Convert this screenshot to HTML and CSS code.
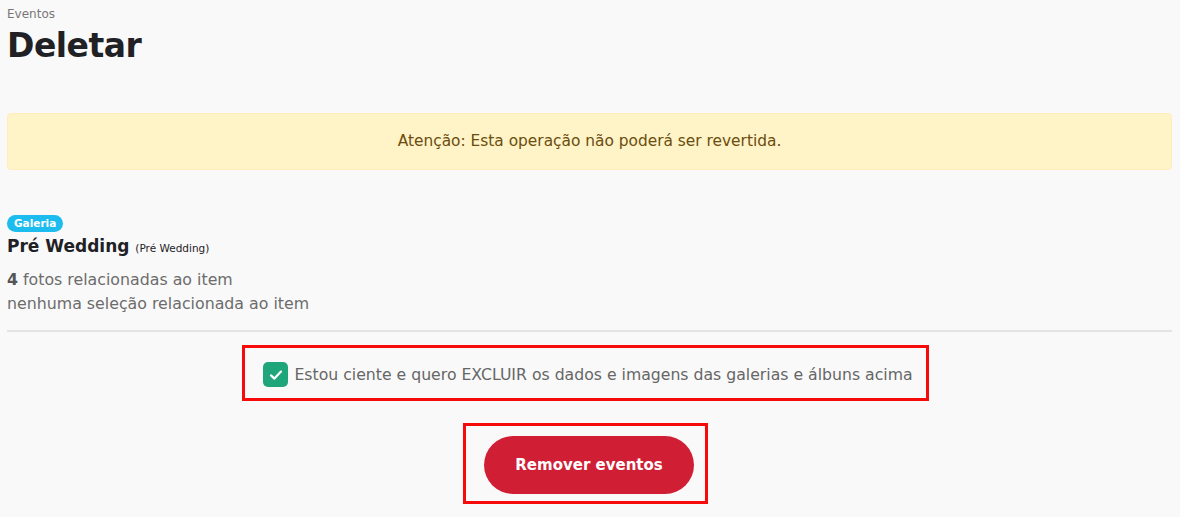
FILE: index.html
```html
<!DOCTYPE html>
<html lang="pt-BR">
<head>
  <meta charset="UTF-8" />
  <meta name="viewport" content="width=device-width, initial-scale=1" />
  <title>Deletar eventos</title>
  <link rel="stylesheet" href="styles.css">
</head>
<body>
  <div class="page">
    <div class="breadcrumb">Eventos</div>
    <h1>Deletar</h1>

    <div class="alert">Atenção: Esta operação não poderá ser revertida.</div>

    <div class="item">
      <span class="badge">Galeria</span>
      <div class="item-title">Pré Wedding <small>(Pré Wedding)</small></div>
      <p class="item-info"><strong>4</strong> fotos relacionadas ao item</p>
      <p class="item-info">nenhuma seleção relacionada ao item</p>
    </div>

    <hr class="divider" />

    <div class="confirm-row">
      <label class="confirm highlight">
        <span class="checkbox">
          <svg width="16" height="16" viewBox="0 0 16 16"><path d="M3 8.4 L6.4 11.6 L13 4.6" fill="none" stroke="#fff" stroke-width="2.2" stroke-linecap="round" stroke-linejoin="round"/></svg>
        </span>
        Estou ciente e quero EXCLUIR os dados e imagens das galerias e álbuns acima
      </label>
    </div>

    <div class="confirm-row">
      <div class="highlight btn-wrap">
        <button type="button" class="btn-danger">Remover eventos</button>
      </div>
    </div>
  </div>
</body>
</html>
```

FILE: styles.css
```css
body {
  margin: 0;
  background: #f9f9f9;
  font-family: "DejaVu Sans", sans-serif;
  color: #212529;
}
.page {
  padding: 6px 8px 0 7px;
}
.breadcrumb {
  font-size: 12px;
  color: #777;
  line-height: 16px;
}
h1 {
  margin: 4px 0 0;
  font-size: 33px;
  font-weight: bold;
  color: #1f2125;
  line-height: 40px;
  letter-spacing: -0.5px;
}
.alert {
  margin-top: 47px;
  background: #fff3c8;
  border: 1px solid #ffeeba;
  border-radius: 4px;
  color: #6b4d0d;
  text-align: center;
  font-size: 15.4px;
  height: 55px;
  line-height: 55px;
}
.item {
  margin-top: 42px;
}
.badge {
  display: inline-block;
  background: #1dbcee;
  color: #fff;
  font-size: 10.5px;
  font-weight: bold;
  padding: 0 7px;
  height: 17px;
  line-height: 17px;
  border-radius: 9px;
}
.item-title {
  margin-top: 4px;
  font-size: 17px;
  font-weight: bold;
  color: #1f2125;
  line-height: 20px;
}
.item-title small {
  font-size: 10.5px;
  font-weight: normal;
}
.item-info {
  margin: 0;
  font-size: 15.8px;
  color: #6c6c6c;
  line-height: 24px;
}
.item-info:first-of-type {
  margin-top: 10px;
}
.item-info strong {
  color: #555;
}
.divider {
  margin: 14px 0 0;
  border: 0;
  border-top: 2px solid #e4e4e4;
}
.confirm-row {
  display: flex;
  justify-content: center;
  padding-right: 8px;
}
.highlight {
  border: 3px solid #f70a0a;
}
.confirm {
  margin-top: 13px;
  display: flex;
  align-items: center;
  gap: 6px;
  padding: 14px 13px 11px 18px;
  font-size: 15.7px;
  color: #666;
}
.checkbox {
  width: 25px;
  height: 25px;
  border-radius: 5px;
  background: #1fa57a;
  display: flex;
  align-items: center;
  justify-content: center;
}
.btn-wrap {
  margin-top: 22px;
  padding: 10px 11px 7px 18px;
}
.btn-danger {
  width: 210px;
  height: 58px;
  border: 0;
  border-radius: 29px;
  background: #d01f35;
  color: #fff;
  font-family: "DejaVu Sans", sans-serif;
  font-size: 15px;
  font-weight: bold;
}
```
